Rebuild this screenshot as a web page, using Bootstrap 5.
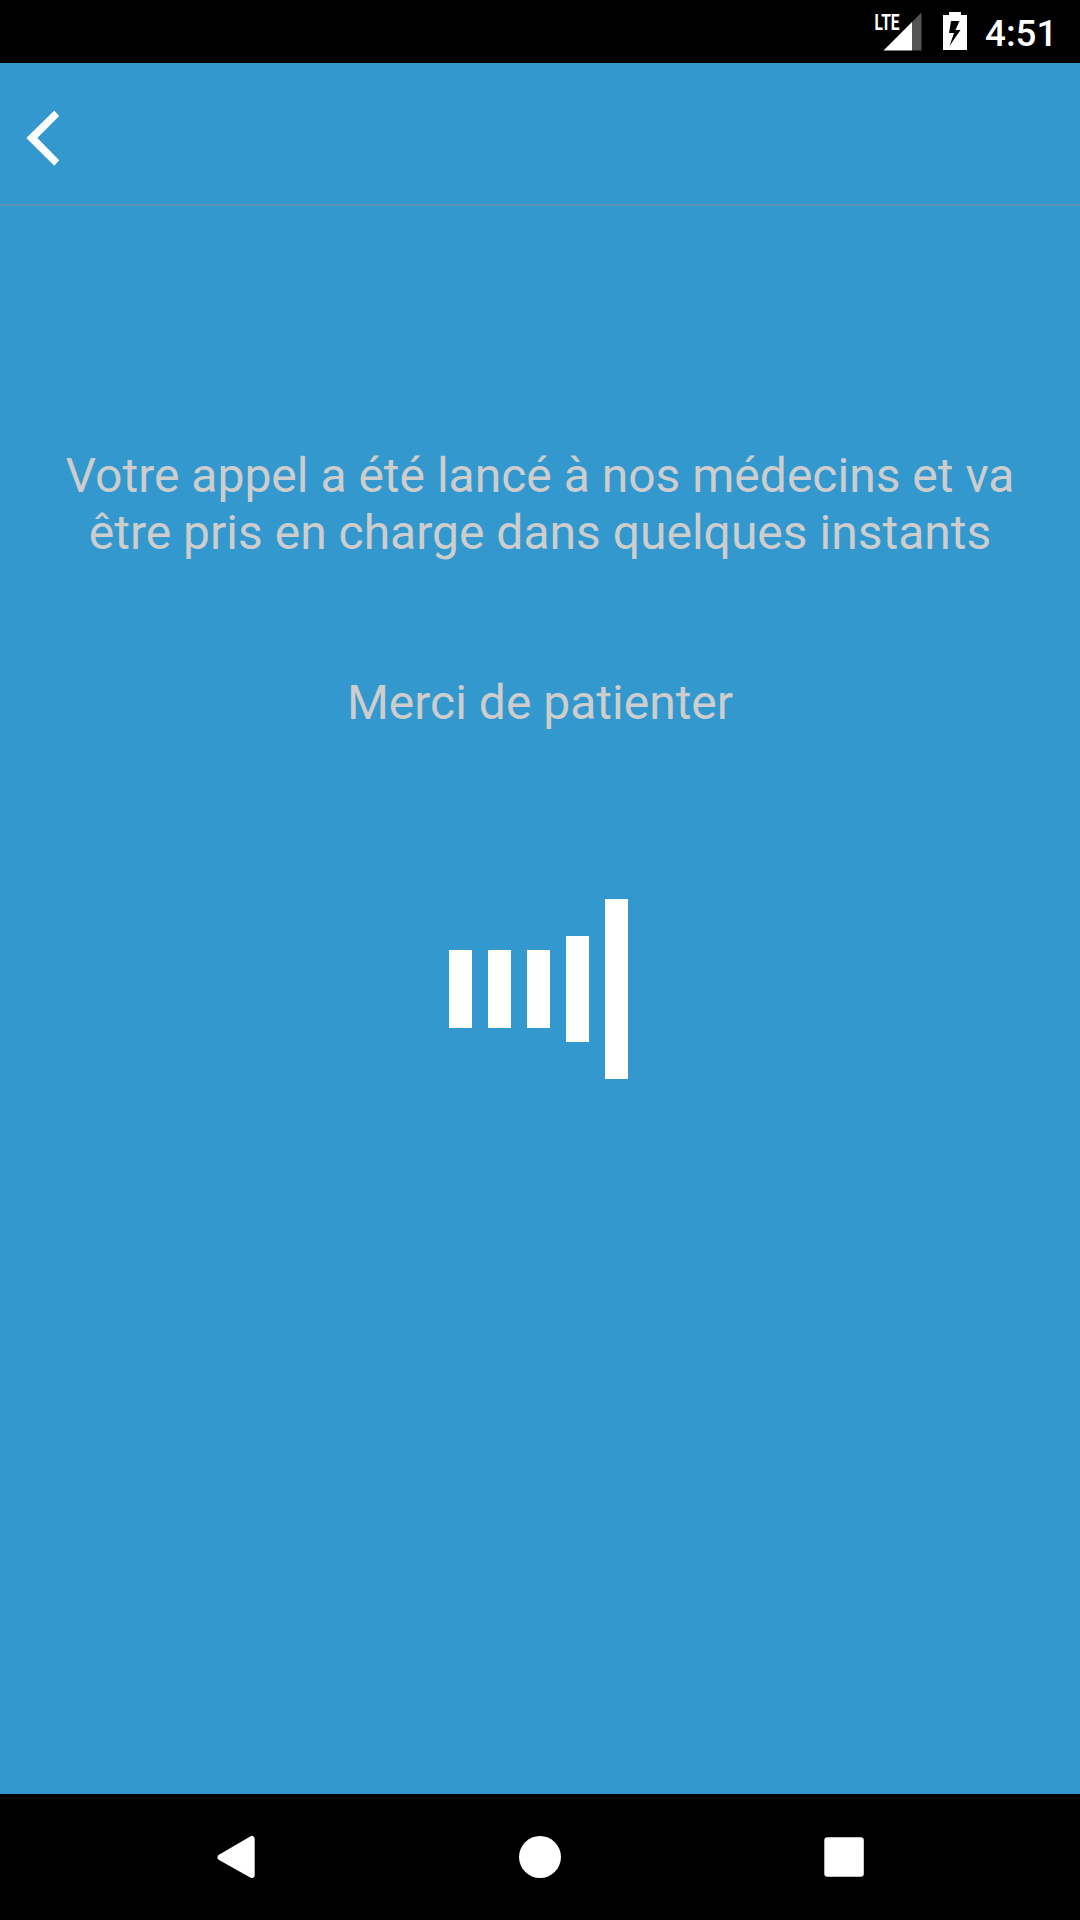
<!DOCTYPE html>
<html lang="fr">
<head>
<meta charset="utf-8">
<meta name="viewport" content="width=device-width, initial-scale=1">
<title>Appel en attente</title>
<link href="https://cdn.jsdelivr.net/npm/bootstrap@5.3.0/dist/css/bootstrap.min.css" rel="stylesheet">
<style>
  body { font-family: Roboto, "Noto Sans", sans-serif; background: #3398cd; }
  svg { display: block; }
  .status-bar { height: 63px; padding-right: 22px; }
  .status-time { font-size: 36.750px; font-weight: 500; line-height: 43px; margin: 4px 0 0 17px; width: 73px; white-space: nowrap; }
  .app-header { height: 143px; border-bottom: 2px solid #5f90b3; padding-left: 24px; }
  .wait-screen { padding-top: 241px; color: #cdcdcd; font-size: 48px; line-height: 57px; }
  .wait-note { margin-top: 113px; }
  .wait-bars { margin-top: 168px; height: 180px; gap: 16px; padding-right: 3px; }
  .bar { width: 23px; height: 78px; }
  .bar-mid { height: 106px; }
  .bar-tall { height: 180px; }
  .system-nav { height: 126px; gap: 244px; }
</style>
<script src="https://cdn.jsdelivr.net/npm/bootstrap@5.3.0/dist/js/bootstrap.bundle.min.js"></script>
</head>
<body class="vh-100 d-flex flex-column overflow-hidden">
  <div class="status-bar bg-black text-white d-flex justify-content-end align-items-center flex-shrink-0">
    <svg width="98" height="63" viewBox="870 0 98 63" fill="#fff">
      <path fill="#555" d="M912 22V50.500H921.500V12.500Z"/>
      <path d="M883.500 50.500L912 22V50.500Z"/>
      <text x="874.500" y="30" font-size="22.500" font-weight="700" textLength="25" lengthAdjust="spacingAndGlyphs">LTE</text>
      <path fill-rule="evenodd" d="M949 15V12H961V15H967V50H943V15ZM951 21L949 33H954L949.500 46L960.500 30H955.500L959.500 21Z"/>
    </svg>
    <span class="status-time">4:51</span>
  </div>
  <header class="app-header d-flex align-items-center flex-shrink-0">
    <svg width="40" height="60" viewBox="24 101 40 60" overflow="visible" role="img" aria-label="Retour">
      <path fill="#fff" d="M26.300 135L54.300 107.500L59.200 113L37.300 135L59.200 157.200L54.300 162.700Z"/>
    </svg>
  </header>
  <main class="wait-screen flex-grow-1 text-center">
    <p class="mb-0">Votre appel a été lancé à nos médecins et va<br>être pris en charge dans quelques instants</p>
    <p class="wait-note mb-0">Merci de patienter</p>
    <div class="wait-bars d-flex justify-content-center align-items-center">
      <div class="bar bg-white"></div>
      <div class="bar bg-white"></div>
      <div class="bar bg-white"></div>
      <div class="bar bar-mid bg-white"></div>
      <div class="bar bar-tall bg-white"></div>
    </div>
  </main>
  <nav class="system-nav bg-black d-flex justify-content-center align-items-center flex-shrink-0">
    <svg width="60" height="60" viewBox="206 1827 60 60"><path fill="#fff" stroke="#fff" stroke-width="6" stroke-linejoin="round" d="M220.500 1857.300L251.700 1839V1875Z"/></svg>
    <svg width="60" height="60"><circle cx="30" cy="30" r="21" fill="#fff"/></svg>
    <svg width="60" height="60"><rect x="10.300" y="10.300" width="39.500" height="39.500" rx="3" fill="#fff"/></svg>
  </nav>
</body>
</html>
